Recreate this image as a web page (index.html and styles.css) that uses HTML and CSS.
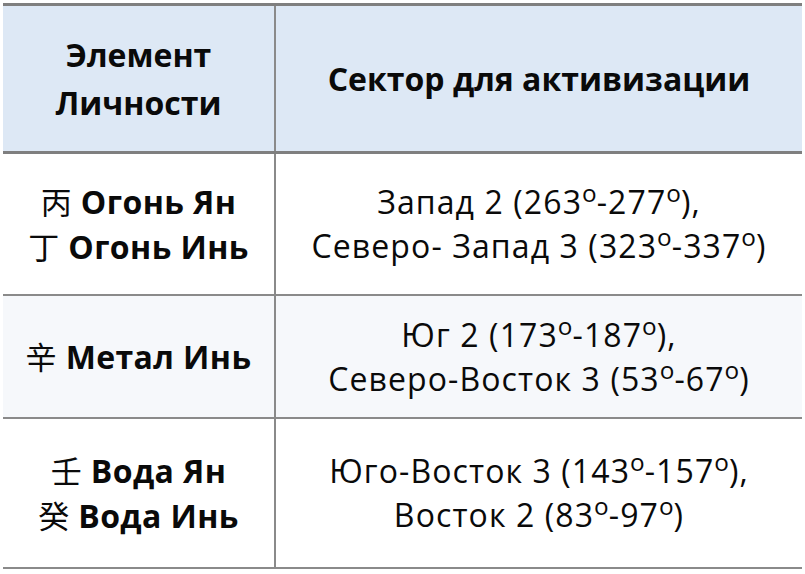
FILE: index.html
```html
<!DOCTYPE html>
<html lang="ru">
<head>
<meta charset="utf-8">
<link rel="stylesheet" href="styles.css">
</head>
<body>
<div class="wrap">
<table class="tbl">
  <thead>
    <tr>
      <th class="c1">Элемент<br>Личности</th>
      <th class="c2">Сектор для активизации</th>
    </tr>
  </thead>
  <tbody>
    <tr class="r1">
      <td class="c1 el"><span class="cjk">丙</span> Огонь Ян<br><span class="cjk">丁</span> Огонь Инь</td>
      <td class="c2 sec">Запад 2 (263<sup class="deg">o</sup>-277<sup class="deg">o</sup>),<br>Северо- Запад 3 (323<sup class="deg">o</sup>-337<sup class="deg">o</sup>)</td>
    </tr>
    <tr class="r2 alt">
      <td class="c1 el"><span class="cjk">辛</span> Метал Инь</td>
      <td class="c2 sec">Юг 2 (173<sup class="deg">o</sup>-187<sup class="deg">o</sup>),<br>Северо-Восток 3 (53<sup class="deg">o</sup>-67<sup class="deg">o</sup>)</td>
    </tr>
    <tr class="r3">
      <td class="c1 el"><span class="cjk">壬</span> Вода Ян<br><span class="cjk">癸</span> Вода Инь</td>
      <td class="c2 sec">Юго-Восток 3 (143<sup class="deg">o</sup>-157<sup class="deg">o</sup>),<br>Восток 2 (83<sup class="deg">o</sup>-97<sup class="deg">o</sup>)</td>
    </tr>
  </tbody>
</table>
</div>
</body>
</html>
```
FILE: styles.css
```css
html, body {
  margin: 0;
  padding: 0;
  background: #ffffff;
}
.wrap {
  padding: 3px 3px 0 3px;
}
.tbl {
  width: 799px;
  border-collapse: collapse;
  font-family: "Open Sans", "Noto Sans", sans-serif;
  color: #0a0a0a;
  border-top: 3px solid #7f7f7f;
  border-bottom: 2px solid #8a8a8a;
}
.tbl th {
  background: #dde8f5;
  font-weight: 700;
  font-size: 32px;
  line-height: 48px;
  height: 145px;
  padding: 0;
  text-align: center;
  vertical-align: middle;
  border-bottom: 3px solid #7f7f7f;
}
.tbl td {
  font-size: 32px;
  line-height: 44px;
  padding: 0;
  text-align: center;
  vertical-align: middle;
  border-bottom: 2px solid #8a8a8a;
}
.c1 {
  width: 271px;
  border-right: 2px solid #8a8a8a;
}
.el {
  font-weight: 700;
  letter-spacing: 0.4px;
}
.sec {
  font-weight: 400;
  letter-spacing: 1.1px;
}
.r1 td { height: 140px; }
.r2 td { height: 121px; }
.r3 td { height: 148px; }
.alt td { background: #f6f8fb; }
.cjk {
  font-family: "Noto Sans CJK SC", "Noto Sans CJK JP", sans-serif;
  font-weight: 400;
  font-size: 31px;
}
.deg {
  font-size: 0.76em;
  line-height: 0;
  vertical-align: 0.5em;
  letter-spacing: 0;
}
```
